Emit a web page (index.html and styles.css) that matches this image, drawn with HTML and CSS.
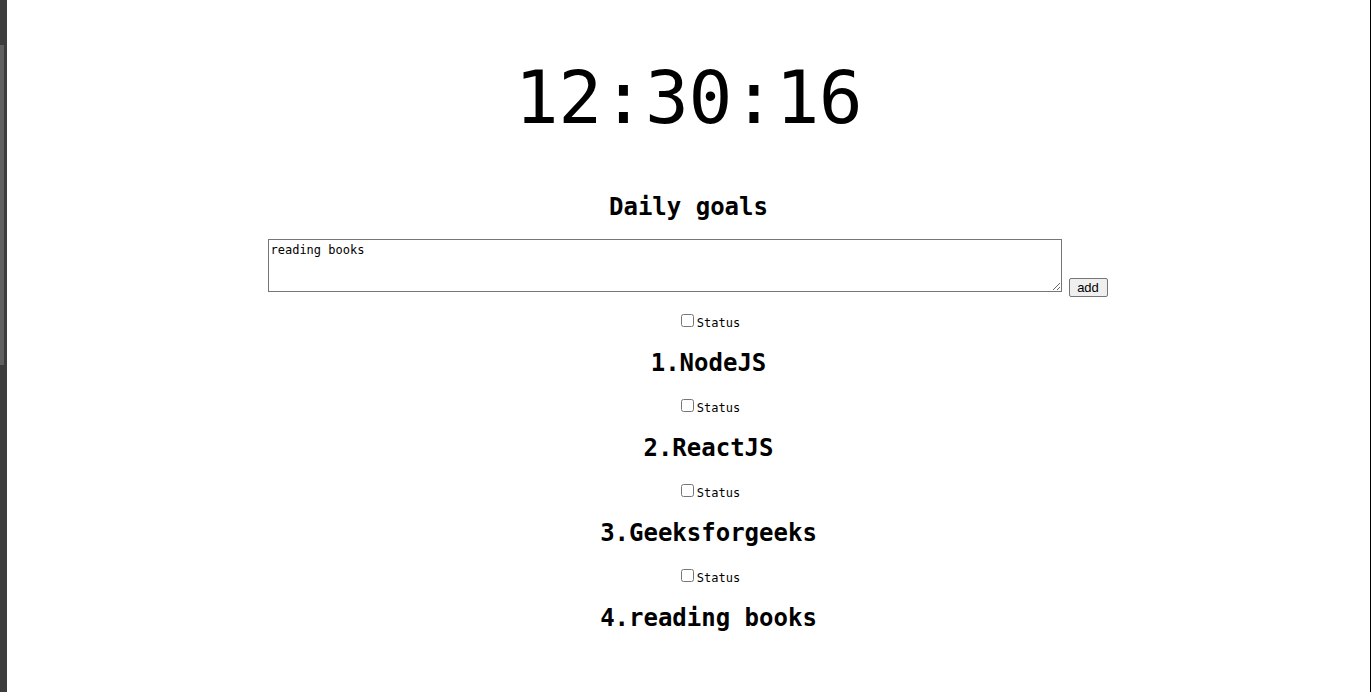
FILE: index.html
```html
<!DOCTYPE html>
<html>
<head>
<meta charset="utf-8">
<link rel="stylesheet" href="styles.css">
</head>
<body>
<div class="frame">
  <div class="gutter"><div class="thumb"></div></div>
  <main class="page">
    <div class="clock">12:30:16</div>
    <h2 class="title">Daily goals</h2>
    <div class="entry">
      <textarea class="input">reading books</textarea>
      <button class="add">add</button>
    </div>
    <ul class="goals">
      <li class="goal">
        <label class="status"><input type="checkbox" class="check"><span>Status</span></label>
        <h2 class="goal-name">1.NodeJS</h2>
      </li>
      <li class="goal">
        <label class="status"><input type="checkbox" class="check"><span>Status</span></label>
        <h2 class="goal-name">2.ReactJS</h2>
      </li>
      <li class="goal">
        <label class="status"><input type="checkbox" class="check"><span>Status</span></label>
        <h2 class="goal-name">3.Geeksforgeeks</h2>
      </li>
      <li class="goal">
        <label class="status"><input type="checkbox" class="check"><span>Status</span></label>
        <h2 class="goal-name">4.reading books</h2>
      </li>
    </ul>
  </main>
</div>
</body>
</html>
```
FILE: styles.css
```css
html, body {
  margin: 0;
  padding: 0;
  height: 100%;
  background: #ffffff;
}
body {
  font-family: "DejaVu Sans Mono", "Liberation Mono", monospace;
  color: #000;
  overflow: hidden;
}
.frame {
  display: flex;
  height: 692px;
}
.gutter {
  width: 7px;
  flex: none;
  background: #3d3d3d;
  padding-top: 45px;
  box-sizing: border-box;
}
.thumb {
  width: 4px;
  height: 320px;
  background: #606060;
}
.page {
  flex: 1;
  border-right: 1px solid #000;
  display: flex;
  flex-direction: column;
  align-items: center;
}
.clock {
  margin-top: 61px;
  font-size: 73px;
  line-height: 73px;
  height: 73px;
  letter-spacing: -0.5px;
}
.title {
  margin: 58px 0 0;
  font-size: 24px;
  line-height: 30px;
  font-weight: bold;
}
.entry {
  margin-top: 17px;
  display: flex;
  align-items: flex-end;
  gap: 7px;
  margin-left: -2px;
}
.input {
  width: 794px;
  height: 53px;
  box-sizing: border-box;
  margin: 0 0 5px;
  padding: 3px 2px;
  border: 1px solid #767676;
  border-radius: 0;
  font-family: "DejaVu Sans Mono", monospace;
  font-size: 12px;
  line-height: 14px;
  color: #000;
  resize: both;
}
.add {
  width: 39px;
  height: 19px;
  box-sizing: border-box;
  padding: 0;
  margin: 0;
  border: 1px solid #767676;
  border-radius: 2px;
  background: #efefef;
  font-family: "Liberation Sans", Arial, sans-serif;
  font-size: 13px;
  color: #000;
}
.goals {
  list-style: none;
  margin: 17px 0 0;
  padding: 0 0 0 40px;
  display: flex;
  flex-direction: column;
  align-items: center;
}
.goal {
  display: flex;
  flex-direction: column;
  align-items: center;
  height: 85px;
}
.status {
  display: flex;
  align-items: flex-end;
  height: 13px;
  font-size: 12px;
  line-height: 12px;
}
.check {
  width: 13px;
  height: 13px;
  margin: 0 3px 0 4px;
}
.status span {
  position: relative;
  top: 2px;
}
.goal-name {
  margin: 21px 0 0;
  font-size: 24px;
  line-height: 30px;
  font-weight: bold;
}
```
